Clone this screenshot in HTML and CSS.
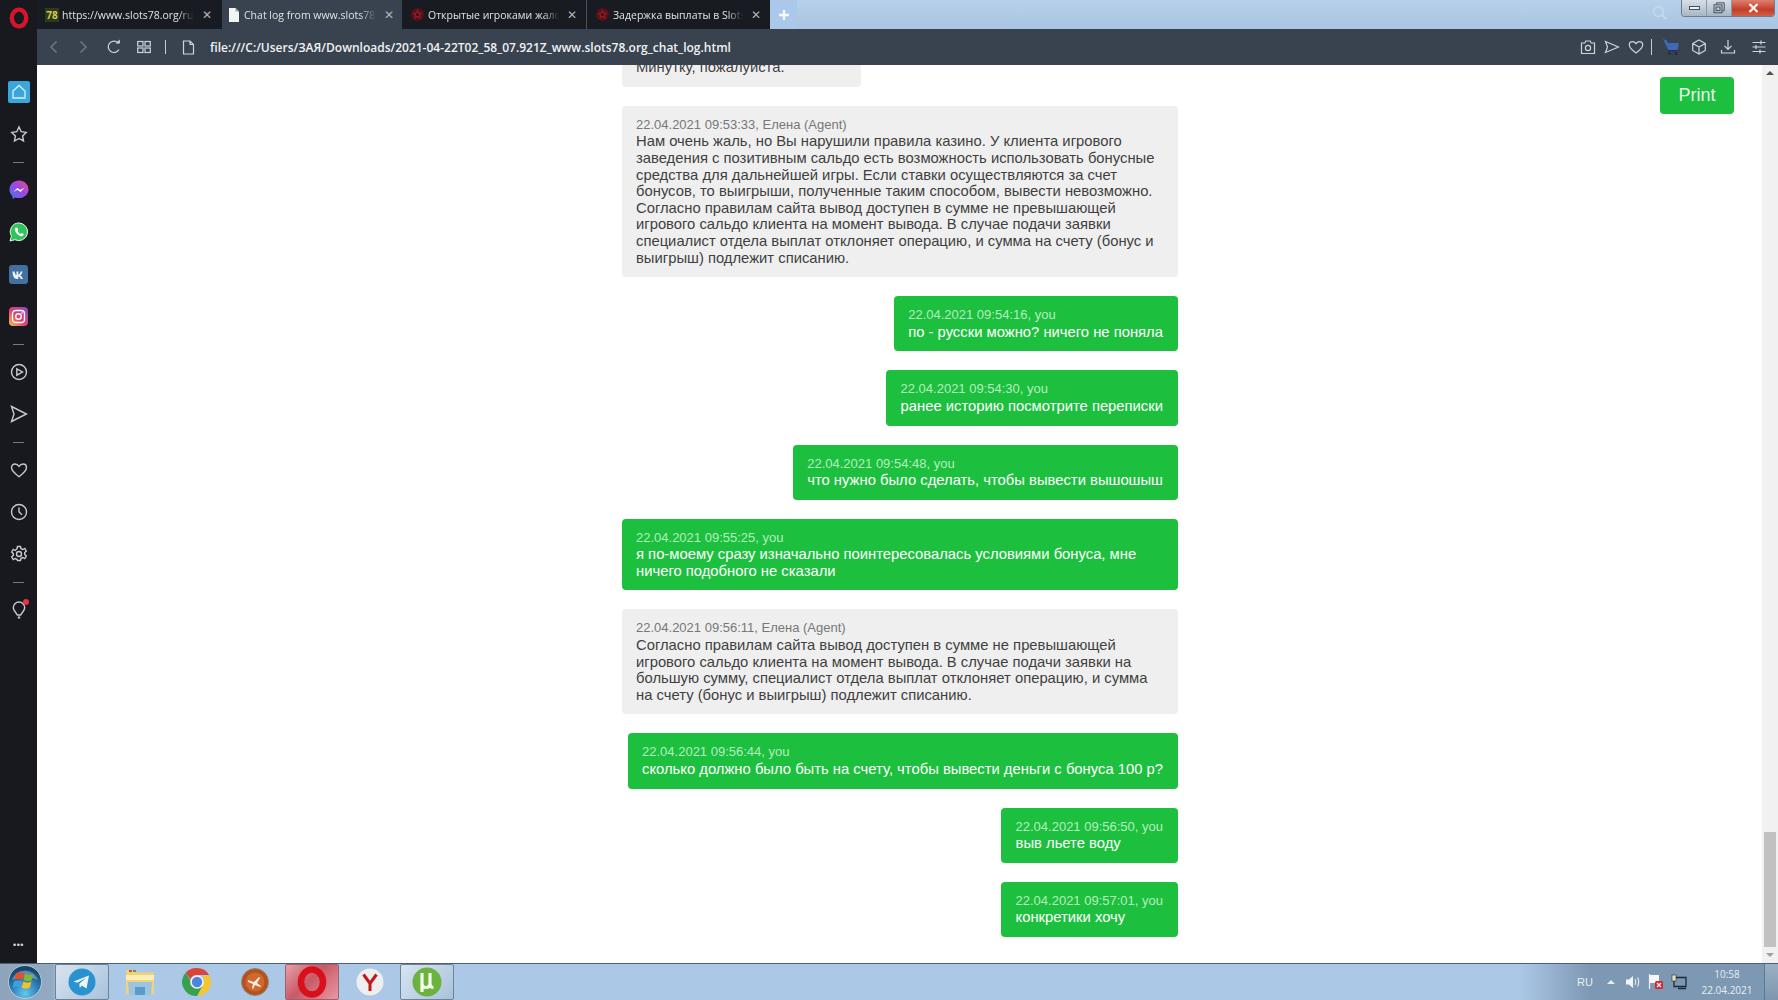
FILE: index.html
```html
<!DOCTYPE html>
<html>

<head>
    <meta charset="utf-8">
    <title>Chat log from www.slots78.org</title>
    <link rel="stylesheet" href="styles.css">
</head>

<body>
    <div class="browser">
        <div class="sidebar">
            <div class="operaLogo">
                <svg width="20" height="22" viewBox="0 0 20 22"><ellipse cx="10" cy="11" rx="7.2" ry="8.4" fill="none" stroke="#d8142c" stroke-width="4.4"/></svg>
            </div>
            <div class="sideItem">
                <svg class="homeIcon" width="22" height="22" viewBox="0 0 22 22"><rect width="22" height="22" rx="2" fill="#3aa7dc"/><path d="M5 10l6-5.5 6 5.500v7H5z" fill="none" stroke="#d8f0fb" stroke-width="1.300"/></svg>
            </div>
            <div class="sideItem">
                <svg width="18" height="18" viewBox="0 0 18 18"><path d="M9 2l2.200 4.700 5 .7-3.600 3.500.9 5L9 13.500 4.500 16l.9-5L1.800 7.400l5-.7z" class="line"/></svg>
            </div>
            <div class="sideSep"></div>
            <div class="sideItem">
                <svg width="20" height="20" viewBox="0 0 20 20"><defs><linearGradient id="mess" x1="0" y1="1" x2="1" y2="0"><stop offset="0" stop-color="#3d7df0"/><stop offset=".55" stop-color="#a244e0"/><stop offset="1" stop-color="#e8507c"/></linearGradient></defs><path d="M10 .5C4.600.5.500 4.400.500 9.500c0 2.700 1.100 5 3 6.600V19l2.800-1.500c1.100.4 2.400.6 3.700.6 5.400 0 9.500-3.900 9.500-8.600S15.400.5 10 .5z" fill="url(#mess)"/><path d="M4.500 12l4-4.300 2.500 2.300 4.500-2.300-4 4.300L8.500 9.700z" fill="#fff"/></svg>
            </div>
            <div class="sideItem">
                <svg width="20" height="20" viewBox="0 0 20 20"><path d="M10 1a8.800 8.800 0 0 0-7.600 13.300L1 19l4.900-1.300A8.800 8.800 0 1 0 10 1z" fill="#2fc45a" stroke="#e8f5ea" stroke-width="1"/><path d="M6.800 5.600c-1 .7-1.200 2 -.6 3.500 1 2.300 2.600 3.900 4.800 4.800 1.500.5 2.700.3 3.400-.7l.3-1.200-2.200-1.100-1 1.100c-1.200-.5-2.300-1.500-3-2.900l.8-1-.9-2.300z" fill="#fff"/></svg>
            </div>
            <div class="sideItem">
                <svg width="19" height="19" viewBox="0 0 19 19"><rect width="19" height="19" rx="3" fill="#44709f"/><path d="M3.500 6.500h2c.3 2 1.100 3.400 2 3.800V6.500h1.800v3.200c1-.2 1.900-1.500 2.300-3.200h1.900c-.4 2-1.300 3.400-2.400 4 1.300.6 2.300 1.900 2.800 3.500h-2.100c-.4-1.300-1.300-2.300-2.500-2.500V14H8c-2.800 0-4.300-2.700-4.500-7.500z" fill="#eef2f7"/></svg>
            </div>
            <div class="sideItem">
                <svg width="19" height="19" viewBox="0 0 19 19"><defs><linearGradient id="insta" x1="0" y1="1" x2="1" y2="0"><stop offset="0" stop-color="#f9c34a"/><stop offset=".45" stop-color="#e8406a"/><stop offset="1" stop-color="#7a4ad0"/></linearGradient></defs><rect width="19" height="19" rx="4" fill="url(#insta)"/><rect x="3.500" y="3.500" width="12" height="12" rx="3.300" fill="none" stroke="#fff" stroke-width="1.400"/><circle cx="9.500" cy="9.500" r="2.800" fill="none" stroke="#fff" stroke-width="1.400"/><circle cx="13" cy="6" r=".8" fill="#fff"/></svg>
            </div>
            <div class="sideSep"></div>
            <div class="sideItem">
                <svg width="18" height="18" viewBox="0 0 18 18"><circle cx="9" cy="9" r="7.500" class="line"/><path d="M6.800 5.800L12.500 9l-5.700 3.200z" class="line"/></svg>
            </div>
            <div class="sideItem">
                <svg width="18" height="18" viewBox="0 0 18 18"><path d="M1.500 1.500L16.500 9 1.500 16.500 4 9z" class="line"/></svg>
            </div>
            <div class="sideSep"></div>
            <div class="sideItem">
                <svg width="18" height="18" viewBox="0 0 18 18"><path d="M9 15.800C4 12 1.500 9.700 1.500 6.600 1.500 4.400 3.100 3 5 3c1.700 0 3.100 1 4 2.300C9.900 4 11.300 3 13 3c1.900 0 3.500 1.400 3.500 3.600 0 3.100-2.500 5.400-7.500 9.200z" class="line"/></svg>
            </div>
            <div class="sideItem">
                <svg width="18" height="18" viewBox="0 0 18 18"><circle cx="9" cy="9" r="7.500" class="line"/><path d="M9 4.500V9l3 2.800" class="line"/></svg>
            </div>
            <div class="sideItem">
                <svg width="18" height="18" viewBox="0 0 18 18"><circle cx="9" cy="9" r="2.500" class="line"/><path d="M7.500 1.500h3l.5 2.200 1.800.8 2-1.100 1.500 2.600-1.600 1.500v2l1.600 1.500-1.500 2.600-2-1.100-1.800.8-.5 2.200h-3L7 14.300l-1.800-.8-2 1.100-1.500-2.600L3.300 10.500v-2L1.700 7l1.500-2.600 2 1.100L7 3.700z" class="line"/></svg>
            </div>
            <div class="sideSep"></div>
            <div class="sideItem bulb">
                <svg width="18" height="20" viewBox="0 0 18 20"><path d="M9 2a5.700 5.700 0 0 0-5.700 5.700c0 2.800 2.700 4.600 4 7.300h3.400c1.300-2.700 4-4.500 4-7.300A5.700 5.700 0 0 0 9 2z" class="line"/><path d="M7.800 16.500h2.400v2H7.800z" fill="#c8cbd0"/></svg>
                <span class="bulbDot"></span>
            </div>
            <div class="sideDots">•••</div>
        </div>

        <div class="window">
            <div class="tabBar">
                <div class="tab">
                    <span class="favicon78">78</span>
                    <span class="tabText">https://www.slots78.org/ru/</span>
                    <span class="tabClose">✕</span>
                </div>
                <div class="tab tabActive">
                    <svg width="12" height="14" viewBox="0 0 12 14"><path d="M1 0h6.500L11 3.500V14H1z" fill="#f2f4f6"/><path d="M7.500 0v3.500H11" fill="#9aa4ae"/></svg>
                    <span class="tabText">Chat log from www.slots78.org</span>
                    <span class="tabClose">✕</span>
                </div>
                <div class="tab tabFlower">
                    <svg width="15" height="15" viewBox="0 0 15 15"><circle cx="7.500" cy="7.500" r="6.500" fill="#5a1018"/><path d="M7.500 2l1.500 3.500 3.500.4-2.500 2.500.7 3.600-3.200-1.800-3.200 1.800.7-3.600L2.500 5.900 6 5.500z" fill="#8e1a28"/><circle cx="7.500" cy="7.500" r="1.500" fill="#3a0a10"/></svg>
                    <span class="tabText">Открытые игроками жалобы</span>
                    <span class="tabClose">✕</span>
                </div>
                <div class="tab tabFlower tabLast">
                    <svg width="15" height="15" viewBox="0 0 15 15"><circle cx="7.500" cy="7.500" r="6.500" fill="#5a1018"/><path d="M7.500 2l1.500 3.500 3.500.4-2.500 2.500.7 3.600-3.200-1.800-3.200 1.800.7-3.600L2.500 5.900 6 5.500z" fill="#8e1a28"/><circle cx="7.500" cy="7.500" r="1.500" fill="#3a0a10"/></svg>
                    <span class="tabText">Задержка выплаты в Slots78</span>
                    <span class="tabClose">✕</span>
                </div>
                <div class="tabPlus">
                    <svg width="12" height="12" viewBox="0 0 12 12"><path d="M6 1v10M1 6h10" stroke="#f4f8fc" stroke-width="2.400"/></svg>
                </div>
                <div class="tabSearch">
                    <svg width="16" height="16" viewBox="0 0 16 16"><circle cx="6.500" cy="6.500" r="4.800" fill="none" stroke="#d6e4f2" stroke-width="1.500"/><path d="M10 10l4.500 4.500" stroke="#d6e4f2" stroke-width="1.800"/></svg>
                </div>
                <div class="winButtons">
                    <div class="winMin"><span></span></div>
                    <div class="winMax">
                        <svg width="12" height="12" viewBox="0 0 12 12"><path d="M3.500 2.500V.8h7.700v8H9.500" fill="none" stroke="#43505c"/><rect x="1" y="2.800" width="8" height="8" fill="none" stroke="#43505c"/><rect x="3" y="5" width="4" height="3.600" fill="none" stroke="#43505c"/></svg>
                    </div>
                    <div class="winClose">
                        <svg width="11" height="10" viewBox="0 0 11 10"><path d="M1.500 1l8 8M9.500 1l-8 8" stroke="#f4efe9" stroke-width="2.400"/></svg>
                    </div>
                </div>
            </div>

            <div class="toolBar">
                <svg class="navBack" width="12" height="14" viewBox="0 0 12 14"><path d="M8.500 1.500L3 7l5.500 5.500" class="dimLine"/></svg>
                <svg class="navForward" width="12" height="14" viewBox="0 0 12 14"><path d="M3.500 1.500L9 7l-5.500 5.500" class="dimLine"/></svg>
                <svg class="navReload" width="16" height="16" viewBox="0 0 16 16"><path d="M13 10.500A5.700 5.700 0 1 1 12 3.700" class="toolLine"/><path d="M9.500 4.500h4.300V.5z" fill="#d5d9dd"/></svg>
                <svg class="navGrid" width="14" height="14" viewBox="0 0 14 14"><rect x=".7" y="1.500" width="5.300" height="4.500" class="toolLine"/><rect x="8" y="1.500" width="5.300" height="4.500" class="toolLine"/><rect x=".7" y="8" width="5.300" height="4.500" class="toolLine"/><rect x="8" y="8" width="5.300" height="4.500" class="toolLine"/></svg>
                <span class="toolSep navSep"></span>
                <svg class="navPage" width="13" height="15" viewBox="0 0 13 15"><path d="M1.500 1h6.500l3.500 3.500V14h-10z M8 1v3.500h3.500" class="toolLine"/></svg>
                <span class="urlText">file:///C:/Users/ЗАЯ/Downloads/2021-04-22T02_58_07.921Z_www.slots78.org_chat_log.html</span>
                <div class="toolRight">
                    <svg class="ico24" width="16" height="16" viewBox="0 0 16 16"><path d="M1.500 4h3.300l1-2h4.400l1 2h3.300v10.500h-13z" class="toolLine"/><circle cx="8" cy="9" r="2.600" class="toolLine"/></svg>
                    <svg class="ico24" width="16" height="16" viewBox="0 0 16 16"><path d="M1.500 2.500L14.500 8 1.500 13.500 3.500 8z" class="toolLine"/></svg>
                    <svg class="ico24" width="16" height="16" viewBox="0 0 16 16"><path d="M8 14C3.500 10.700 1.300 8.700 1.300 6 1.300 4 2.800 2.700 4.500 2.700 6 2.700 7.200 3.500 8 4.700 8.800 3.500 10 2.700 11.500 2.700 13.200 2.700 14.700 4 14.700 6 14.700 8.700 12.500 10.700 8 14z" class="toolLine"/></svg>
                    <span class="toolSep sepRight"></span>
                    <svg class="icoCart" width="18" height="18" viewBox="0 0 18 18"><path d="M1 1l4 1.500L6 5h11l-1.500 7H6.500z" fill="#3f68b8"/><rect x="6" y="12" width="9.500" height="1.300" fill="#22344e"/><circle cx="7.500" cy="15.500" r="1.300" fill="#1c2a3c"/><circle cx="14" cy="15.500" r="1.300" fill="#1c2a3c"/></svg>
                    <svg class="ico29" width="16" height="16" viewBox="0 0 16 16"><path d="M8 1l6.300 3.500v7L8 15l-6.300-3.500v-7zM1.700 4.500L8 8l6.300-3.500M8 8v7" class="toolLine"/></svg>
                    <svg class="ico30" width="16" height="16" viewBox="0 0 16 16"><path d="M8 1v9M4.500 6.800L8 10.300l3.500-3.500M1.500 11v3h13v-3" class="toolLine"/></svg>
                    <svg class="ico30" width="16" height="16" viewBox="0 0 16 16"><path d="M1.500 3.500h13M1.500 8h13M1.500 12.500h13" class="toolLine"/><path d="M10 1.500v4M5 6v4M9 10.500v4" class="toolLine"/></svg>
                </div>
            </div>

            <div class="content">
                <div class="page">
                    <div class="log">
                        <div class="msg agent">
                            <div class="meta">22.04.2021 09:52:10, Елена (Agent)</div>
                            <div class="body">Минутку, пожалуйста.</div>
                        </div>
                        <div class="msg agent">
                            <div class="meta">22.04.2021 09:53:33, Елена (Agent)</div>
                            <div class="body">Нам очень жаль, но Вы нарушили правила казино. У клиента игрового заведения с позитивным сальдо есть возможность использовать бонусные средства для дальнейшей игры. Если ставки осуществляются за счет бонусов, то выигрыши, полученные таким способом, вывести невозможно. Согласно правилам сайта вывод доступен в сумме не превышающей игрового сальдо клиента на момент вывода. В случае подачи заявки специалист отдела выплат отклоняет операцию, и сумма на счету (бонус и выигрыш) подлежит списанию.</div>
                        </div>
                        <div class="msg you">
                            <div class="meta">22.04.2021 09:54:16, you</div>
                            <div class="body">по - русски можно? ничего не поняла</div>
                        </div>
                        <div class="msg you">
                            <div class="meta">22.04.2021 09:54:30, you</div>
                            <div class="body">ранее историю посмотрите переписки</div>
                        </div>
                        <div class="msg you">
                            <div class="meta">22.04.2021 09:54:48, you</div>
                            <div class="body">что нужно было сделать, чтобы вывести вышошыш</div>
                        </div>
                        <div class="msg you">
                            <div class="meta">22.04.2021 09:55:25, you</div>
                            <div class="body">я по-моему сразу изначально поинтересовалась условиями бонуса, мне ничего подобного не сказали</div>
                        </div>
                        <div class="msg agent">
                            <div class="meta">22.04.2021 09:56:11, Елена (Agent)</div>
                            <div class="body">Согласно правилам сайта вывод доступен в сумме не превышающей игрового сальдо клиента на момент вывода. В случае подачи заявки на большую сумму, специалист отдела выплат отклоняет операцию, и сумма на счету (бонус и выигрыш) подлежит списанию.</div>
                        </div>
                        <div class="msg you">
                            <div class="meta">22.04.2021 09:56:44, you</div>
                            <div class="body">сколько должно было быть на счету, чтобы вывести деньги с бонуса 100 р?</div>
                        </div>
                        <div class="msg you">
                            <div class="meta">22.04.2021 09:56:50, you</div>
                            <div class="body">выв льете воду</div>
                        </div>
                        <div class="msg you">
                            <div class="meta">22.04.2021 09:57:01, you</div>
                            <div class="body">конкретики хочу</div>
                        </div>
                    </div>
                    <button class="printBtn">Print</button>
                </div>
                <div class="scrollBar">
                    <div class="arrowUp"></div>
                    <div class="thumb"></div>
                    <div class="arrowDown"></div>
                </div>
            </div>
        </div>
    </div>

    <div class="taskBar">
        <div class="startOrb">
            <svg width="34" height="34" viewBox="0 0 34 34"><defs><radialGradient id="orb" cx=".5" cy=".85" r=".75"><stop offset="0" stop-color="#62c8f0"/><stop offset=".6" stop-color="#2a78b0"/><stop offset="1" stop-color="#16466e"/></radialGradient></defs><circle cx="17" cy="17" r="16.500" fill="url(#orb)" stroke="#c8d8e6" stroke-width=".8"/><path d="M4 15a13.500 13 0 0 1 26 0c-8-4-18-4-26 0z" fill="#fff" opacity=".3"/><path d="M8 8.500c2.900-1.200 5.800-1.200 8.300.2l-1.600 6.300c-2.400-1.200-5-1.400-8.200-.2z" fill="#e8502a"/><path d="M17.300 9c2.400 1.400 5.300 1.400 8.200.2L23.700 15.300c-2.800 1.200-5.600 1.200-8.200-.2z" fill="#7fbc2f"/><path d="M6.200 16.200c3.200-1.200 5.800-1 8.200.2L12.800 22.700c-2.400-1.200-5-1.400-8.200-.2z" fill="#3aa0e0"/><path d="M15.300 16.600c2.600 1.400 5.400 1.400 8.200-.2L21.700 22.700c-2.800 1.200-5.600 1.200-8.200-.2z" fill="#f6c028"/></svg>
        </div>
        <div class="taskApps">
            <div class="taskBtn taskOpen">
                <svg width="28" height="28" viewBox="0 0 28 28"><circle cx="14" cy="14" r="13.500" fill="#2a93cf"/><path d="M5.500 13.500L21 7.500 18.500 20.500 13.800 17.500 11.800 20l-.5-4.200 7-6-9 5z" fill="#eef6fb"/></svg>
            </div>
            <div class="taskBtn">
                <svg width="32" height="30" viewBox="0 0 32 30"><path d="M2 3h9l2 2.500h17V27H2z" fill="#f0d278"/><path d="M2 8h28v5H2z" fill="#fbeeb4"/><path d="M4 15h24l-1 13H5z" fill="#9cc4e0"/><rect x="11" y="20" width="10" height="8" fill="#5a9cc8"/><rect x="5" y="3" width="3" height="2" fill="#d8503a"/><rect x="9" y="3" width="3" height="2" fill="#5a9a4a"/></svg>
            </div>
            <div class="taskBtn">
                <svg width="30" height="30" viewBox="0 0 30 30"><path d="M15 1a14 14 0 0 1 12.100 7H15a7 7 0 0 0-6.500 4.400L3.800 5.600A14 14 0 0 1 15 1z" fill="#dd4438"/><path d="M27.100 8A14 14 0 0 1 15 29l5.600-10.500A7 7 0 0 0 20.500 10z" fill="#f6c52c"/><path d="M3.800 5.600l5.900 10.200A7 7 0 0 0 20.600 18.500L15 29A14 14 0 0 1 3.800 5.600z" fill="#38a04e"/><circle cx="15" cy="15" r="6.800" fill="#f4f4f4"/><circle cx="15" cy="15" r="5.200" fill="#4a86e0"/></svg>
            </div>
            <div class="taskBtn">
                <svg width="28" height="28" viewBox="0 0 28 28"><circle cx="14" cy="14" r="13.500" fill="#b4511e" stroke="#8a8a8a"/><circle cx="14" cy="14" r="9.500" fill="#d0682c"/><path d="M7 12l6 2 5-5 1 1-3 5 4 3-1 1-5-2-2 4-1-1 1-4-5-2z" fill="#f6efe6"/></svg>
            </div>
            <div class="taskBtn taskOpera">
                <svg width="30" height="32" viewBox="0 0 30 32"><ellipse cx="15" cy="16" rx="11" ry="12.500" fill="none" stroke="#d8101e" stroke-width="6.500"/></svg>
            </div>
            <div class="taskBtn">
                <svg width="28" height="28" viewBox="0 0 28 28"><circle cx="14" cy="14" r="13.500" fill="#eeeeee"/><path d="M7.500 6.500L14 15.500 20.500 6.500M14 15v8" fill="none" stroke="#c8141e" stroke-width="3"/></svg>
            </div>
            <div class="taskBtn taskOpen">
                <svg width="30" height="30" viewBox="0 0 30 30"><circle cx="15" cy="15" r="14.500" fill="#6cb33e"/><path d="M10 6v19M10 16c0 3 1.500 4.500 4 4.500s4-1.500 4-4.500V6M18 6v11c0 2.500 1 3.500 3.500 3.500" fill="none" stroke="#f2f8ec" stroke-width="3.200"/></svg>
            </div>
        </div>
        <div class="tray">
            <span class="trayLang">RU</span>
            <span class="trayArrow"></span>
            <svg class="trayIcon" width="16" height="16" viewBox="0 0 16 16"><path d="M1 5.500h3L8 2v12L4 10.500H1z" fill="#f2f5f8"/><path d="M10 5c1 1.800 1 4.200 0 6M12.500 3.500c1.500 2.800 1.500 6.200 0 9" fill="none" stroke="#e4eaf0" stroke-width="1.100"/></svg>
            <svg class="trayIcon" width="16" height="16" viewBox="0 0 16 16"><path d="M1.500 0v15" stroke="#f0f3f6" stroke-width="1.200"/><path d="M2 1h9v8H2z" fill="#f4f6f8"/><rect x="7" y="7" width="8" height="8" rx="1.500" fill="#d8242c"/><path d="M9 9l4 4M13 9l-4 4" stroke="#fff" stroke-width="1.300"/></svg>
            <svg class="trayIcon" width="16" height="16" viewBox="0 0 16 16"><rect x="1" y="1" width="4" height="6" fill="#e8dfc0" stroke="#26333f" stroke-width=".6"/><path d="M5 3.500h10v9H5M3 7v5.500h2M7 14.500h8" fill="none" stroke="#1e2a36" stroke-width="1.300"/></svg>
            <div class="trayClock">
                <div>10:58</div>
                <div>22.04.2021</div>
            </div>
            <div class="showDesktop"></div>
        </div>
    </div>
</body>

</html>
```

FILE: styles.css
```css
html, body {
    margin: 0;
    padding: 0;
    height: 100%;
}

body {
    display: flex;
    flex-direction: column;
    height: 1000px;
    overflow: hidden;
    background-color: #fff;
    font-family: "Liberation Sans", Arial, sans-serif;
}

.browser {
    flex: 1;
    display: flex;
    min-height: 0;
}

/* left panel */
.sidebar {
    width: 37px;
    flex-shrink: 0;
    display: flex;
    flex-direction: column;
    align-items: center;
    background-color: #17191f;
}

.operaLogo {
    height: 71px;
    padding-top: 7px;
    box-sizing: border-box;
}

.sideItem {
    height: 42px;
    display: flex;
    align-items: center;
    justify-content: center;
    flex-shrink: 0;
    position: relative;
}

.sideSep {
    height: 14px;
    width: 11px;
    flex-shrink: 0;
    background: linear-gradient(#797b80, #797b80) center / 11px 1px no-repeat;
}

.line {
    fill: none;
    stroke: #c8cbd0;
    stroke-width: 1.400;
}

.bulbDot {
    position: absolute;
    top: 10px;
    left: 13px;
    width: 6px;
    height: 6px;
    border-radius: 50%;
    background-color: #e8323e;
}

.sideDots {
    margin-top: auto;
    padding-bottom: 10px;
    font-size: 9px;
    line-height: 16px;
    letter-spacing: 0.5px;
    color: #d8d8d8;
}

/* tabs */
.window {
    flex: 1;
    min-width: 0;
    display: flex;
    flex-direction: column;
}

.tabBar {
    height: 29px;
    flex-shrink: 0;
    display: flex;
    align-items: stretch;
    background: linear-gradient(#b7d0ea, #a9c5e2);
}

.tab {
    width: 185px;
    box-sizing: border-box;
    display: flex;
    align-items: center;
    padding: 0 8px;
    background-color: #181b21;
    font-family: "Open Sans", sans-serif;
    font-size: 10.500px;
    color: #dfe2e5;
}

.tabActive {
    width: 180px;
    padding: 0 6px;
    background-color: #39434f;
}

.tabActive .tabText {
    margin-left: 4px;
}

.tabFlower {
    width: 184px;
    padding-right: 7px;
}

.tabLast {
    border-left: 1px solid #4a4e55;
}

.favicon78 {
    width: 14px;
    flex-shrink: 0;
    background-color: #2c3a1c;
    color: #d8c850;
    font-size: 10px;
    font-weight: bold;
    line-height: 14px;
    text-align: center;
}

.tabText {
    flex: 1;
    min-width: 0;
    margin-left: 3px;
    white-space: nowrap;
    overflow: hidden;
    -webkit-mask-image: linear-gradient(to right, #000 88%, transparent);
    mask-image: linear-gradient(to right, #000 88%, transparent);
}

.tabClose {
    width: 14px;
    margin-left: 6px;
    flex-shrink: 0;
    font-size: 12px;
    text-align: center;
    color: #aeb2b8;
}

.tabPlus {
    width: 27px;
    display: flex;
    align-items: center;
    justify-content: center;
    background-color: #a9c8ea;
}

.tabSearch {
    margin-left: auto;
    padding-top: 5px;
    margin-right: 13px;
    opacity: 0.6;
}

.winButtons {
    width: 94px;
    height: 17px;
    margin-right: 3px;
    display: flex;
    border: 1px solid #6d7d8d;
    border-top: none;
    border-radius: 0 0 4px 4px;
    overflow: hidden;
    box-sizing: border-box;
}

.winMin, .winMax {
    width: 25px;
    display: flex;
    align-items: center;
    justify-content: center;
    background: linear-gradient(#d6dfe8, #a8b6c4);
    border-right: 1px solid #8a98a6;
    box-sizing: border-box;
}

.winMin span {
    width: 11px;
    height: 4px;
    border: 1px solid #43505c;
    background-color: #eef2f5;
    box-sizing: border-box;
}

.winClose {
    flex: 1;
    display: flex;
    align-items: center;
    justify-content: center;
    background: linear-gradient(#de8070, #c23e2a 60%, #d0604a);
}

/* address bar */
.toolBar {
    height: 36px;
    flex-shrink: 0;
    display: flex;
    align-items: center;
    background-color: #39434f;
    color: #f0f2f4;
}

.toolLine {
    fill: none;
    stroke: #cfd3d8;
    stroke-width: 1.200;
}

.dimLine {
    fill: none;
    stroke: #6c7785;
    stroke-width: 1.500;
}

.navBack {
    margin-left: 11px;
}

.navForward {
    margin-left: 17px;
}

.navReload {
    margin-left: 17px;
}

.navGrid {
    margin-left: 15px;
}

.toolSep {
    width: 1px;
    height: 14px;
    background-color: #c8ccd0;
}

.navSep {
    margin-left: 14px;
}

.navPage {
    margin-left: 16px;
}

.urlText {
    margin-left: 15px;
    font-family: "Open Sans", sans-serif;
    font-size: 12px;
    font-weight: 600;
    white-space: nowrap;
}

.toolRight {
    margin-left: auto;
    display: flex;
    align-items: center;
    padding-right: 11px;
}

.ico24 {
    margin-right: 8px;
}

.sepRight {
    margin: 0 10px 0 -1px;
    height: 16px;
}

.icoCart {
    margin-right: 11px;
}

.ico29 {
    margin-right: 13px;
}

.ico30 {
    margin-right: 15px;
}

.ico30:last-child {
    margin-right: 0;
}

/* chat page */
.content {
    flex: 1;
    min-height: 0;
    display: flex;
}

.page {
    flex: 1;
    min-width: 0;
    position: relative;
    overflow: hidden;
    display: flex;
    flex-direction: column;
    align-items: center;
    justify-content: flex-end;
    padding-bottom: 26px;
    box-sizing: border-box;
}

.log {
    width: 556px;
    flex-shrink: 0;
    display: flex;
    flex-direction: column;
    gap: 19px;
}

.msg {
    max-width: 100%;
    box-sizing: border-box;
    padding: 11px 14.500px;
    border-radius: 4px;
    font-size: 14.800px;
    line-height: 16.600px;
}

.agent {
    align-self: flex-start;
    background-color: #efefef;
    color: #3f3f3f;
}

.agent .meta {
    color: #777;
    font-size: 13px;
}

.you {
    align-self: flex-end;
    background-color: #1dbf3e;
    color: #fff;
}

.you .meta {
    color: #b4efbe;
    font-size: 13px;
}

.printBtn {
    position: absolute;
    top: 12px;
    right: 28px;
    width: 74px;
    height: 37px;
    padding: 0;
    border: none;
    border-radius: 4px;
    background-color: #1dbf3e;
    color: #e4f8e8;
    font-family: "Liberation Sans", Arial, sans-serif;
    font-size: 18px;
}

.scrollBar {
    width: 16px;
    flex-shrink: 0;
    display: flex;
    flex-direction: column;
    align-items: center;
    background-color: #f1f1f1;
}

.arrowUp, .arrowDown {
    width: 0;
    height: 0;
    flex-shrink: 0;
    border-left: 4px solid transparent;
    border-right: 4px solid transparent;
}

.arrowUp {
    margin: 6px 0;
    border-bottom: 4px solid #505050;
}

.arrowDown {
    margin: 6px 0;
    border-top: 4px solid #a0a0a0;
}

.thumb {
    width: 12px;
    height: 115px;
    margin-top: auto;
    background-color: #c1c1c1;
}

/* windows taskbar */
.taskBar {
    height: 37px;
    flex-shrink: 0;
    box-sizing: border-box;
    display: flex;
    align-items: center;
    border-top: 1px solid #4a6078;
    background: linear-gradient(to right, #8ea4ba 0, #93aac2 52px, #abc8e6 60px, #abc8e6 1520px, #7d98b3 1590px);
}

.startOrb {
    width: 50px;
    padding-left: 8px;
    box-sizing: border-box;
    display: flex;
}

.taskApps {
    display: flex;
    gap: 3.500px;
    margin-left: 5px;
}

.taskBtn {
    width: 54px;
    height: 36px;
    display: flex;
    align-items: center;
    justify-content: center;
    box-sizing: border-box;
}

.taskOpen {
    border: 1px solid #6f8298;
    border-radius: 2px;
    background: linear-gradient(135deg, #d8e4f0, #a8c2dc);
}

.taskOpera {
    border: 1px solid #a06070;
    border-radius: 2px;
    background: linear-gradient(135deg, #e8a0a8, #c85a66 45%, #e69aa2);
}

.tray {
    margin-left: auto;
    display: flex;
    align-items: center;
    height: 100%;
    color: #e8eef4;
}

.trayLang {
    font-size: 11px;
    margin-right: 14px;
}

.trayArrow {
    width: 0;
    height: 0;
    margin-right: 10px;
    border-left: 4px solid transparent;
    border-right: 4px solid transparent;
    border-bottom: 4px solid #e6edf4;
}

.trayIcon {
    margin-right: 7px;
}

.trayClock {
    width: 60px;
    margin-left: 3px;
    margin-right: 7px;
    font-family: "Open Sans", sans-serif;
    font-size: 10px;
    line-height: 16px;
    text-align: center;
}

.showDesktop {
    width: 13px;
    height: 100%;
    border-left: 1px solid #5d7892;
    background: linear-gradient(#9ab0c6, #7d96ae);
}
```
